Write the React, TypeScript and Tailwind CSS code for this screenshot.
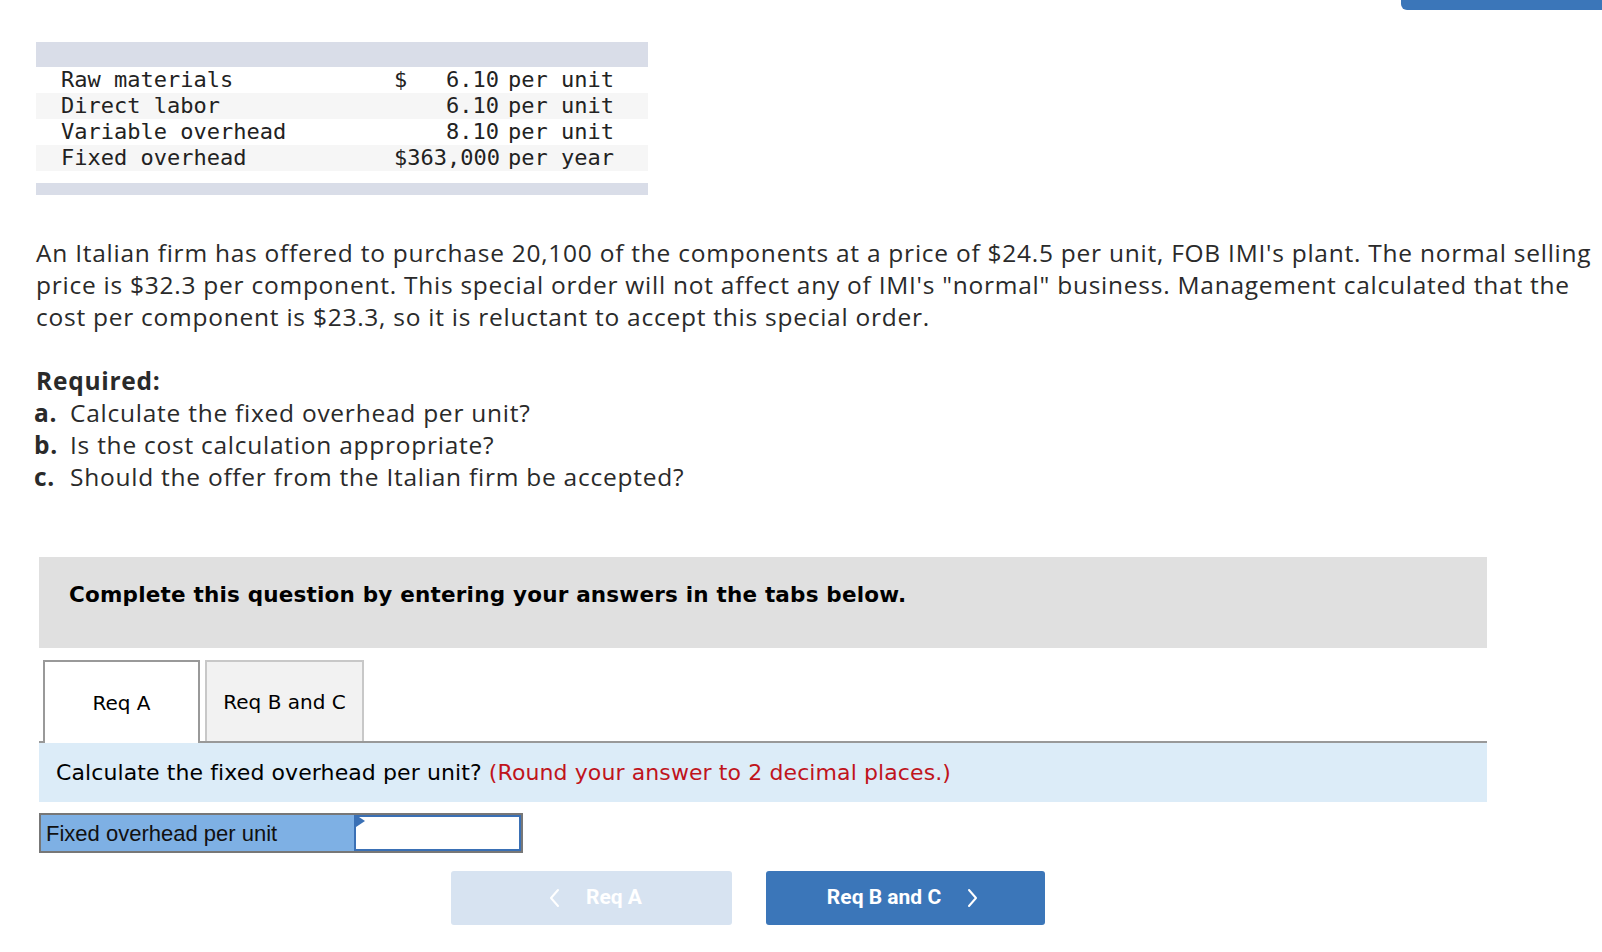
import React from 'react';

const rows = [
  { label: 'Raw materials', dollar: '$', amount: '6.10', unit: 'per unit' },
  { label: 'Direct labor', dollar: '', amount: '6.10', unit: 'per unit' },
  { label: 'Variable overhead', dollar: '', amount: '8.10', unit: 'per unit' },
  { label: 'Fixed overhead', dollar: '', amount: '$363,000', unit: 'per year' },
];

const required = [
  { key: 'a.', text: 'Calculate the fixed overhead per unit?' },
  { key: 'b.', text: 'Is the cost calculation appropriate?' },
  { key: 'c.', text: 'Should the offer from the Italian firm be accepted?' },
];

const Chevron = ({ dir }: { dir: 'left' | 'right' }) => (
  <svg width="11" height="20" viewBox="0 0 11 20" fill="none" stroke="currentColor" strokeWidth="2" strokeLinecap="round" strokeLinejoin="round">
    {dir === 'left' ? <polyline points="9,2 2,10 9,18" /> : <polyline points="2,2 9,10 2,18" />}
  </svg>
);

export default function App() {
  return (
    <div className="min-h-screen bg-white text-[#222]">
      {/* cut-off header button */}
      <div className="flex justify-end">
        <div className="h-[10px] w-[201px] rounded-bl-[6px] bg-[#3b76b9]" />
      </div>

      {/* cost table */}
      <div className="ml-[36px] mt-[32px] w-[612px] font-['DejaVu_Sans_Mono',monospace] text-[22px] leading-[26px] text-[#222]">
        <div className="h-[25px] bg-[#d9dde8]" />
        {rows.map((r, i) => (
          <div key={r.label} className={`flex h-[26px] items-center ${i % 2 === 1 ? 'bg-[#f6f6f6]' : 'bg-white'}`}>
            <div className="w-[358px] pl-[25px]">{r.label}</div>
            <div className="flex w-[105px] justify-between">
              <span>{r.dollar}</span>
              <span>{r.amount}</span>
            </div>
            <div className="pl-[9px]">{r.unit}</div>
          </div>
        ))}
        <div className="h-[12px]" />
        <div className="h-[12px] bg-[#d9dde8]" />
      </div>

      {/* problem text */}
      <div className="ml-[36px] mt-[42px] font-['Open_Sans',sans-serif] text-[24.5px] leading-[32px] tracking-[0.75px] text-[#2a2a2a] whitespace-nowrap">
        <p>
          An Italian firm has offered to purchase 20,100 of the components at a price of $24.5 per unit, FOB IMI's plant. The normal selling
          <br />
          price is $32.3 per component. This special order will not affect any of IMI's "normal" business. Management calculated that the
          <br />
          cost per component is $23.3, so it is reluctant to accept this special order.
        </p>
        <p className="mt-[32px] font-bold">Required:</p>
        <ul>
          {required.map((q) => (
            <li key={q.key} className="flex">
              <span className="-ml-[2px] w-[36px] font-bold">{q.key}</span>
              <span>{q.text}</span>
            </li>
          ))}
        </ul>
      </div>

      {/* answer area */}
      <div className="ml-[39px] mt-[64px] w-[1448px]">
        <div className="h-[91px] bg-[#e0e0e0] pl-[30px] pt-[24px] font-['DejaVu_Sans',Verdana,sans-serif] text-[21.5px] font-bold leading-[28px] tracking-[0.2px] text-black">
          Complete this question by entering your answers in the tabs below.
        </div>

        <div className="mt-[12px] flex items-end border-b-2 border-[#999] pl-[4px] font-['DejaVu_Sans',Verdana,sans-serif] text-[20px] text-black">
          <div className="-mb-[2px] flex h-[83px] w-[157px] items-center justify-center border-2 border-b-0 border-[#999] bg-white">
            Req A
          </div>
          <div className="ml-[5px] flex h-[81px] w-[159px] items-center justify-center border-2 border-b-0 border-[#c8c8c8] bg-[#f2f2f2]">
            Req B and C
          </div>
        </div>

        <div className="flex h-[59px] items-center bg-[#dcecf8] pl-[17px] font-['DejaVu_Sans',Verdana,sans-serif] text-[22px] tracking-[0.1px] text-black">
          Calculate the fixed overhead per unit?&nbsp;<span className="text-[#c0141c]">(Round your answer to 2 decimal places.)</span>
        </div>

        <div className="mt-[11px] flex h-[40px] w-[484px] border-2 border-[#777]">
          <div className="flex w-[313px] items-center bg-[#7eb0e4] pl-[5px] font-['Liberation_Sans',Arial,sans-serif] text-[22px] text-[#111]">
            Fixed overhead per unit
          </div>
          <div className="relative flex-1 border-2 border-[#3a70b5] bg-white">
            <div className="absolute left-0 top-0 h-0 w-0 border-l-[9px] border-t-[6px] border-b-[6px] border-l-[#3a70b5] border-t-transparent border-b-transparent -translate-y-[2px]" />
          </div>
        </div>

        <div className="mt-[18px] ml-[412px] flex gap-[34px] font-['Roboto',sans-serif] text-[21px] font-bold text-white">
          <button className="flex h-[54px] w-[281px] items-center justify-center gap-[26px] rounded-[3px] bg-[#d7e3f1] pl-[8px]">
            <Chevron dir="left" />
            <span>Req A</span>
          </button>
          <button className="flex h-[54px] w-[279px] items-center justify-center gap-[26px] rounded-[3px] bg-[#3b76b9] pr-[6px]">
            <span>Req B and C</span>
            <Chevron dir="right" />
          </button>
        </div>
      </div>
    </div>
  );
}
